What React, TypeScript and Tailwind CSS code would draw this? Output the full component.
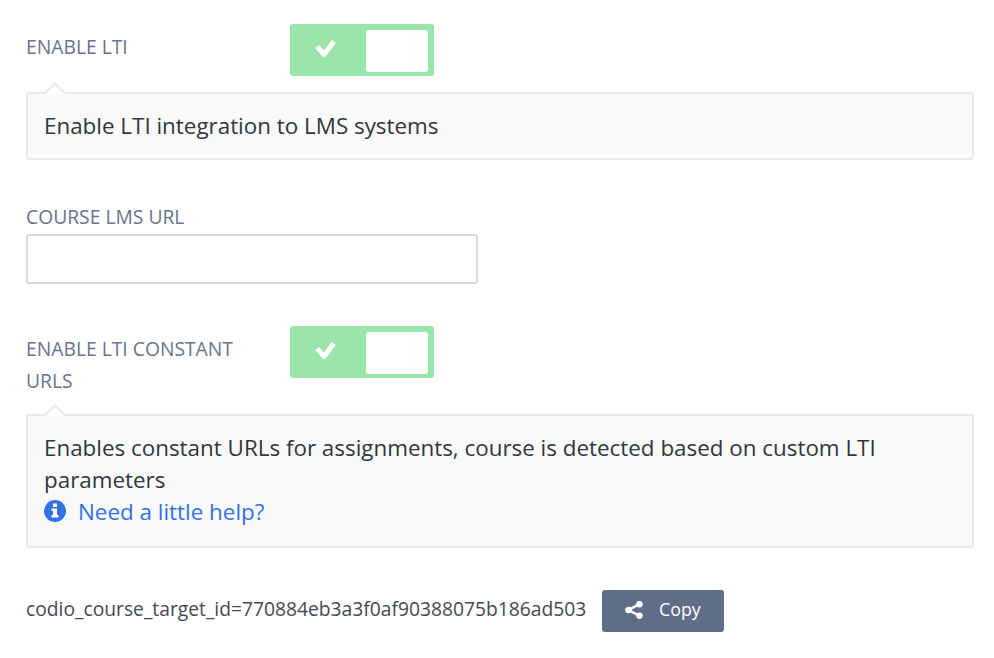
import React from "react";

function Toggle() {
  return (
    <div className="flex h-[52px] w-36 items-start justify-between rounded-[3px] bg-[#9ae5a9] pt-1.5 pr-1.5 pl-[25px]">
      <svg className="mt-[9px]" width="21" height="20" viewBox="0 0 21 20" fill="none" stroke="#fff" strokeWidth="5" strokeLinejoin="round">
        <path d="M2.200 7.500 L9 15.500 L18.800 2.500" />
      </svg>
      <div className="h-[42px] w-[62px] rounded-[3px] bg-white" />
    </div>
  );
}

function Hint({ className, children }: { className: string; children: React.ReactNode }) {
  return (
    <div className={"relative w-[948px] rounded-[3px] border-2 border-[#e8eaf1] bg-[#fafafa] px-4 text-[22.4px] leading-8 text-[#30373d] " + className}>
      <svg className="absolute -top-3 left-[15px]" width="24" height="13" viewBox="0 0 24 13">
        <path d="M1.500 12 L12 2 L22.500 12Z" fill="#fff" />
        <path d="M1.500 11.500 L12 1.500 L22.500 11.500" fill="none" stroke="#ececee" strokeWidth="2.500" />
      </svg>
      {children}
    </div>
  );
}

export default function App() {
  return (
    <main className="h-[658px] w-[994px] bg-white px-[26px] pt-6 font-['Open_Sans',sans-serif] text-[19.3px] leading-8 text-[#68748f]">
      <div className="flex h-[68px] items-start">
        <div className="w-[264px] pt-[7px]">ENABLE LTI</div>
        <Toggle />
      </div>
      <Hint className="h-[68px] pt-4">Enable LTI integration to LMS systems</Hint>
      <div className="mt-[41px]">COURSE LMS URL</div>
      <input aria-label="Course LMS URL" className="mt-px block h-[50px] w-[452px] rounded-[3px] border-2 border-[#d5d9e6] bg-white" />
      <div className="mt-[42px] flex h-[88px] items-start">
        <div className="w-[264px] pt-[7px]">ENABLE LTI CONSTANT<br />URLS</div>
        <Toggle />
      </div>
      <Hint className="h-[134px] pt-4">
        Enables constant URLs for assignments, course is detected based on custom LTI<br />parameters
        <a className="flex items-center text-[#3272e3]">
          <svg className="mr-3 mb-0.5" width="22" height="22" viewBox="0 0 22 22">
            <circle cx="11" cy="11" r="11" fill="#3272e3" />
            <path d="M9 3.500h4v3.500H9z M7.500 8.500H13V15h1.500v2.500h-7V15H9v-4H7.500z" fill="#fff" />
          </svg>
          Need a little help?
        </a>
      </Hint>
      <div className="mt-[42px] flex items-start text-[19.250px] text-[#434a54]">
        <span className="w-[576px] pt-[3px] whitespace-nowrap">codio_course_target_id=770884eb3a3f0af90388075b186ad503</span>
        <button className="flex h-[42px] w-[122px] items-center rounded-[3px] bg-[#5f6d87] pb-1 pl-[23px] text-[17.8px] text-white">
          <svg className="mt-0.5 mr-4" width="18" height="18" viewBox="0 0 18 18" fill="#fff" stroke="#fff" strokeWidth="2.500">
            <path d="M14.500 3.200 L3.500 9 L14.500 14.800" fill="none" />
            <circle cx="14.500" cy="3.200" r="2" /><circle cx="3.500" cy="9" r="2" /><circle cx="14.500" cy="14.800" r="2" />
          </svg>
          Copy
        </button>
      </div>
    </main>
  );
}
